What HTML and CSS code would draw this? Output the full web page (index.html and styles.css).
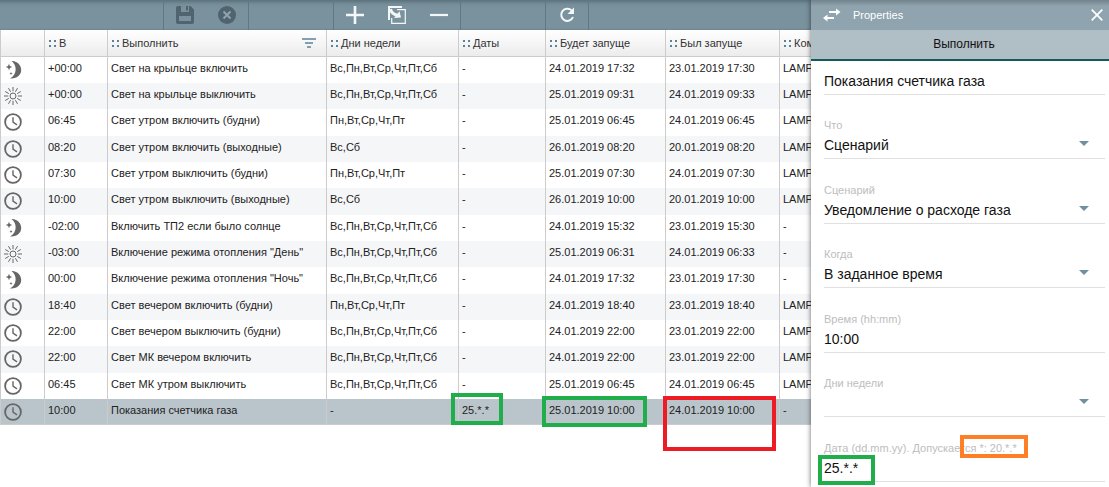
FILE: index.html
```html
<!DOCTYPE html>
<html lang="ru">
<head>
<meta charset="utf-8">
<title>Properties</title>
<link rel="stylesheet" href="styles.css">
</head>
<body>
<svg class="defs" width="0" height="0" aria-hidden="true">
  <symbol id="clock" viewBox="0 0 18 18"><circle cx="9" cy="9" r="7.900" fill="none" stroke="currentColor" stroke-width="1.800"/><path d="M9 4.200v5l4 2.600" fill="none" stroke="currentColor" stroke-width="1.400"/></symbol>
  <symbol id="sun" viewBox="0 0 18 18"><g fill="none" stroke="currentColor" stroke-width="1"><circle cx="9" cy="9" r="3"/><path d="M9 0v4.200M9 13.800V18M0 9h4.200M13.800 9H18M4.500 1.200l2.100 3.600M11.400 13.200l2.100 3.600M1.200 4.500l3.600 2.100M13.200 11.400l3.600 2.100M13.500 1.200l-2.100 3.600M6.600 13.200l-2.100 3.600M1.200 13.500l3.600-2.100M13.200 6.600l3.600-2.100"/></g></symbol>
  <symbol id="moon" viewBox="0 0 18 18"><path fill="currentColor" d="M7.500 0C13.500-.2 17.200 4.500 17.200 9S13.500 18 6 17.500C13 14 13.500 4.500 7.500 0zM5 2.800l.9 2.300L8.200 6l-2.300.9L5 9.200l-.9-2.300L1.800 6l2.300-.9zM7 11l.5 1 1 .5-1 .5-.5 1-.5-1-1-.5 1-.5z"/></symbol>
</svg>
<div class="app">
  <main class="main">
    <div class="toolbar" role="toolbar">
      <div class="group lead"></div>
      <div class="group">
        <button class="tool off" aria-label="Save"><svg width="18" height="18" viewBox="0 0 18 18"><path fill="currentColor" fill-rule="evenodd" d="M0 2a2 2 0 0 1 2-2h3v6h8V0h1.500L18 3.500V16a2 2 0 0 1-2 2H2a2 2 0 0 1-2-2zM3 10v5h12v-5zM10 0h2v4.500h-2z"/></svg></button>
        <button class="tool off" aria-label="Cancel"><svg width="18" height="18" viewBox="0 0 18 18"><circle cx="9" cy="9" r="9" fill="currentColor"/><path d="M5.500 5.500l7 7M12.500 5.500l-7 7" stroke="#8fa4ae" stroke-width="2"/></svg></button>
      </div>
      <div class="group gap"></div>
      <div class="group">
        <button class="tool" aria-label="Add"><svg width="18" height="18" viewBox="0 0 18 18"><path d="M9 0v18M0 9h18" stroke="currentColor" stroke-width="2.600"/></svg></button>
        <button class="tool" aria-label="Copy"><svg width="18" height="18" viewBox="0 0 18 18"><path d="M1 14V1h13" fill="none" stroke="currentColor" stroke-width="2"/><path d="M3.700 12v5.300h13.600V3.700H9" fill="none" stroke="currentColor" stroke-width="1.200"/><path d="M2.500 3c.5 3 3 5.500 7 6.200" fill="none" stroke="currentColor" stroke-width="3"/><path d="M11.500 5.200l1.500 6.300-7 .5z" fill="currentColor"/></svg></button>
        <button class="tool" aria-label="Remove"><svg width="18" height="18" viewBox="0 0 18 18"><path d="M0 9h18" stroke="currentColor" stroke-width="2.200"/></svg></button>
      </div>
      <div class="group gap"></div>
      <div class="group">
        <button class="tool" aria-label="Refresh"><svg width="18" height="18" viewBox="0 0 18 18"><path d="M13.600 4.400A6.100 6.100 0 1 0 15 11" fill="none" stroke="currentColor" stroke-width="2"/><path d="M16 1.500V8H9.500z" fill="currentColor"/></svg></button>
      </div>
      <div class="group rest"></div>
    </div>
    <table class="grid">
      <colgroup><col class="c-icon"><col class="c-time"><col class="c-name"><col class="c-days"><col class="c-dates"><col class="c-next"><col class="c-last"><col class="c-cmd"></colgroup>
      <thead><tr>
        <th></th>
        <th><div class="head"><i class="grip"></i><span>В</span></div></th>
        <th><div class="head"><i class="grip"></i><span>Выполнить</span><svg class="filter" width="14" height="10" viewBox="0 0 14 10"><path d="M0 1h14M3 5h8M5 9h4" stroke="#5c8299" stroke-width="1.600"/></svg></div></th>
        <th><div class="head"><i class="grip"></i><span>Дни недели</span></div></th>
        <th><div class="head"><i class="grip"></i><span>Даты</span></div></th>
        <th><div class="head"><i class="grip"></i><span>Будет запуще</span></div></th>
        <th><div class="head"><i class="grip"></i><span>Был запуще</span></div></th>
        <th><div class="head"><i class="grip"></i><span>Ком</span></div></th>
      </tr></thead>
      <tbody>
        <tr><td><svg class="ico"><use href="#moon"/></svg></td><td>+00:00</td><td>Свет на крыльце включить</td><td>Вс,Пн,Вт,Ср,Чт,Пт,Сб</td><td>-</td><td>24.01.2019 17:32</td><td>23.01.2019 17:30</td><td>LAMP</td></tr>
        <tr><td><svg class="ico"><use href="#sun"/></svg></td><td>+00:00</td><td>Свет на крыльце выключить</td><td>Вс,Пн,Вт,Ср,Чт,Пт,Сб</td><td>-</td><td>25.01.2019 09:31</td><td>24.01.2019 09:33</td><td>LAMP</td></tr>
        <tr><td><svg class="ico"><use href="#clock"/></svg></td><td>06:45</td><td>Свет утром включить (будни)</td><td>Пн,Вт,Ср,Чт,Пт</td><td>-</td><td>25.01.2019 06:45</td><td>24.01.2019 06:45</td><td>LAMP</td></tr>
        <tr><td><svg class="ico"><use href="#clock"/></svg></td><td>08:20</td><td>Свет утром включить (выходные)</td><td>Вс,Сб</td><td>-</td><td>26.01.2019 08:20</td><td>20.01.2019 08:20</td><td>LAMP</td></tr>
        <tr><td><svg class="ico"><use href="#clock"/></svg></td><td>07:30</td><td>Свет утром выключить (будни)</td><td>Пн,Вт,Ср,Чт,Пт</td><td>-</td><td>25.01.2019 07:30</td><td>24.01.2019 07:30</td><td>LAMP</td></tr>
        <tr><td><svg class="ico"><use href="#clock"/></svg></td><td>10:00</td><td>Свет утром выключить (выходные)</td><td>Вс,Сб</td><td>-</td><td>26.01.2019 10:00</td><td>20.01.2019 10:00</td><td>LAMP</td></tr>
        <tr><td><svg class="ico"><use href="#moon"/></svg></td><td>-02:00</td><td>Включить ТП2 если было солнце</td><td>Вс,Пн,Вт,Ср,Чт,Пт,Сб</td><td>-</td><td>24.01.2019 15:32</td><td>23.01.2019 15:30</td><td>-</td></tr>
        <tr><td><svg class="ico"><use href="#sun"/></svg></td><td>-03:00</td><td>Включение режима отопления "День"</td><td>Вс,Пн,Вт,Ср,Чт,Пт,Сб</td><td>-</td><td>25.01.2019 06:31</td><td>24.01.2019 06:33</td><td>-</td></tr>
        <tr><td><svg class="ico"><use href="#moon"/></svg></td><td>00:00</td><td>Включение режима отопления "Ночь"</td><td>Вс,Пн,Вт,Ср,Чт,Пт,Сб</td><td>-</td><td>24.01.2019 17:32</td><td>23.01.2019 17:30</td><td>-</td></tr>
        <tr><td><svg class="ico"><use href="#clock"/></svg></td><td>18:40</td><td>Свет вечером включить (будни)</td><td>Пн,Вт,Ср,Чт,Пт</td><td>-</td><td>24.01.2019 18:40</td><td>23.01.2019 18:40</td><td>LAMP</td></tr>
        <tr><td><svg class="ico"><use href="#clock"/></svg></td><td>22:00</td><td>Свет вечером выключить (будни)</td><td>Вс,Пн,Вт,Ср,Чт,Пт,Сб</td><td>-</td><td>24.01.2019 22:00</td><td>23.01.2019 22:00</td><td>LAMP</td></tr>
        <tr><td><svg class="ico"><use href="#clock"/></svg></td><td>22:00</td><td>Свет МК вечером включить</td><td>Вс,Пн,Вт,Ср,Чт,Пт,Сб</td><td>-</td><td>24.01.2019 22:00</td><td>23.01.2019 22:00</td><td>LAMP</td></tr>
        <tr><td><svg class="ico"><use href="#clock"/></svg></td><td>06:45</td><td>Свет МК утром выключить</td><td>Вс,Пн,Вт,Ср,Чт,Пт,Сб</td><td>-</td><td>25.01.2019 06:45</td><td>24.01.2019 06:45</td><td>LAMP</td></tr>
        <tr class="selected"><td><svg class="ico"><use href="#clock"/></svg></td><td>10:00</td><td>Показания счетчика газа</td><td>-</td><td>25.*.*<i class="mark green m-date"></i></td><td>25.01.2019 10:00<i class="mark green m-next"></i></td><td>24.01.2019 10:00<i class="mark red m-last"></i></td><td>-</td></tr>
      </tbody>
    </table>
  </main>
  <aside class="panel">
    <header class="panel-bar">
      <svg width="18" height="14" viewBox="0 0 18 14"><path d="M6 4h8M4 10h7" stroke="#fff" stroke-width="2"/><path d="M13 .5L17.500 4 13 7.500zM4.500 6.500L0 10l4.500 3.500z" fill="#fff"/></svg>
      <span>Properties</span>
      <button class="close" aria-label="Close"><svg width="12" height="12" viewBox="0 0 12 12"><path d="M.7.7l10.600 10.600M11.300.7L.7 11.300" stroke="#fff" stroke-width="1.700"/></svg></button>
    </header>
    <h2 class="panel-title">Выполнить</h2>
    <form class="form">
      <div class="field first"><input aria-label="Выполнить" value="Показания счетчика газа"></div>
      <div class="field drop"><label for="what">Что</label><select id="what"><option>Сценарий</option></select></div>
      <div class="field drop"><label for="scene">Сценарий</label><select id="scene"><option>Уведомление о расходе газа</option></select></div>
      <div class="field drop"><label for="when">Когда</label><select id="when"><option>В заданное время</option></select></div>
      <div class="field"><label for="time">Время (hh:mm)</label><input id="time" value="10:00"></div>
      <div class="field drop"><label for="days">Дни недели</label><select id="days"><option></option></select></div>
      <div class="field"><label for="date">Дата (dd.mm.yy). Допускается *: 20.*.*</label><input id="date" value="25.*.*"><i class="mark orange m-hint"></i><i class="mark green m-value"></i></div>
    </form>
  </aside>
</div>
</body>
</html>
```
FILE: styles.css
```css
* { box-sizing: border-box; }
body { margin: 0; background: #fff; color: #333; font: 11px/16px "Liberation Sans", Arial, sans-serif; }
button, input, select { font: inherit; color: inherit; border: 0; border-radius: 0; padding: 0; margin: 0; background: none; }
.defs { position: absolute; }
.app { display: flex; height: 100vh; overflow: hidden; }
.main { flex: 1; min-width: 0; overflow: hidden; }

.toolbar { display: flex; height: 30px; background: linear-gradient(#5c717b, #748d99 4px, #7a929e 8px, #7a929e 28px, #6c858f); }
.group { display: flex; border-left: 1px solid #5f7984; }
.group.lead { width: 163px; border-left: 0; }
.group.gap { width: 85px; }
.group.rest { flex: 1; }
.tool { display: flex; align-items: center; justify-content: center; width: 42px; color: #f4f7f8; }
.tool.off { color: #4f646e; }

.grid { width: 900px; table-layout: fixed; border-collapse: separate; border-spacing: 0; }
.c-icon { width: 44px; }
.c-time { width: 63px; }
.c-name { width: 219px; }
.c-days { width: 132px; }
.c-dates { width: 87px; }
.c-next { width: 120px; }
.c-last { width: 114px; }
th { height: 27px; padding: 0 0 0 4px; background: linear-gradient(#fff, #ececec); border-left: 1px solid #ccc; border-bottom: 1px solid #ccc; font-weight: normal; text-align: left; }
.head { display: flex; align-items: center; height: 26px; gap: 3px; white-space: nowrap; color: #333; }
.grip { width: 7px; height: 7px; flex: none; background:
  linear-gradient(#55839b, #55839b) 0 0 / 2px 2px no-repeat,
  linear-gradient(#55839b, #55839b) 5px 0 / 2px 2px no-repeat,
  linear-gradient(#55839b, #55839b) 0 5px / 2px 2px no-repeat,
  linear-gradient(#55839b, #55839b) 5px 5px / 2px 2px no-repeat; }
.filter { margin-left: auto; margin-right: 10px; }
td { position: relative; height: 26px; padding: 3px 0 0 3px; vertical-align: top; border-left: 1px solid #ccc; white-space: nowrap; color: #222; }
tr:nth-child(3n) td { height: 27px; }
tbody tr:nth-child(even) td { background: #f5f6f8; }
tbody tr.selected td { background: #bac5cb; border-bottom: 1px solid #ccc; }
.ico { display: block; width: 18px; height: 18px; margin-top: 1px; color: #666; }

.mark { position: absolute; pointer-events: none; z-index: 1; border: 4px solid; }
.green { border-color: #1fae49; }
.red { border-color: #ed1c24; }
.orange { border-color: #ff7f27; }
.m-date { left: -8px; top: -6px; width: 52px; height: 32px; }
.m-next { left: -4px; top: -3px; width: 105px; height: 31px; }
.m-last { left: -3px; top: -3px; width: 113px; height: 55px; }
.m-hint { left: 136px; bottom: 23px; width: 68px; height: 23px; }
.m-value { left: -6px; bottom: -4px; width: 57px; height: 30px; }

.panel { position: relative; width: 298px; flex: none; background: #fff; box-shadow: 0 0 5px rgba(0, 0, 0, .6); }
.panel-bar { display: flex; align-items: center; height: 30px; padding: 0 6px 0 12px; gap: 12px; background: linear-gradient(#71838c, #8fa4ae 6px); color: #fff; }
.close { display: flex; margin-left: auto; }
.panel-title { height: 31px; margin: 0; background: #b0bec5; border-bottom: 2px solid #14595c; color: #111; font-size: 12px; font-weight: normal; line-height: 29px; text-align: center; padding-left: 8px; }
.form { padding: 0 4px 0 13px; color: #111; }
.field { position: relative; display: flex; flex-direction: column; justify-content: flex-end; height: 64px; border-bottom: 1px solid #e0e0e0; }
.field:nth-child(odd) { height: 65px; }
.field.first { height: 34px; }
.field label { color: #bdbdbd; line-height: 16px; }
.field input, .field select { width: 100%; height: 25px; font-size: 14px; line-height: 25px; appearance: none; outline: 0; }
.drop::after { content: ""; position: absolute; right: 16px; bottom: 12px; border: 5px solid transparent; border-top-color: #6f909f; border-bottom: 0; }
```
